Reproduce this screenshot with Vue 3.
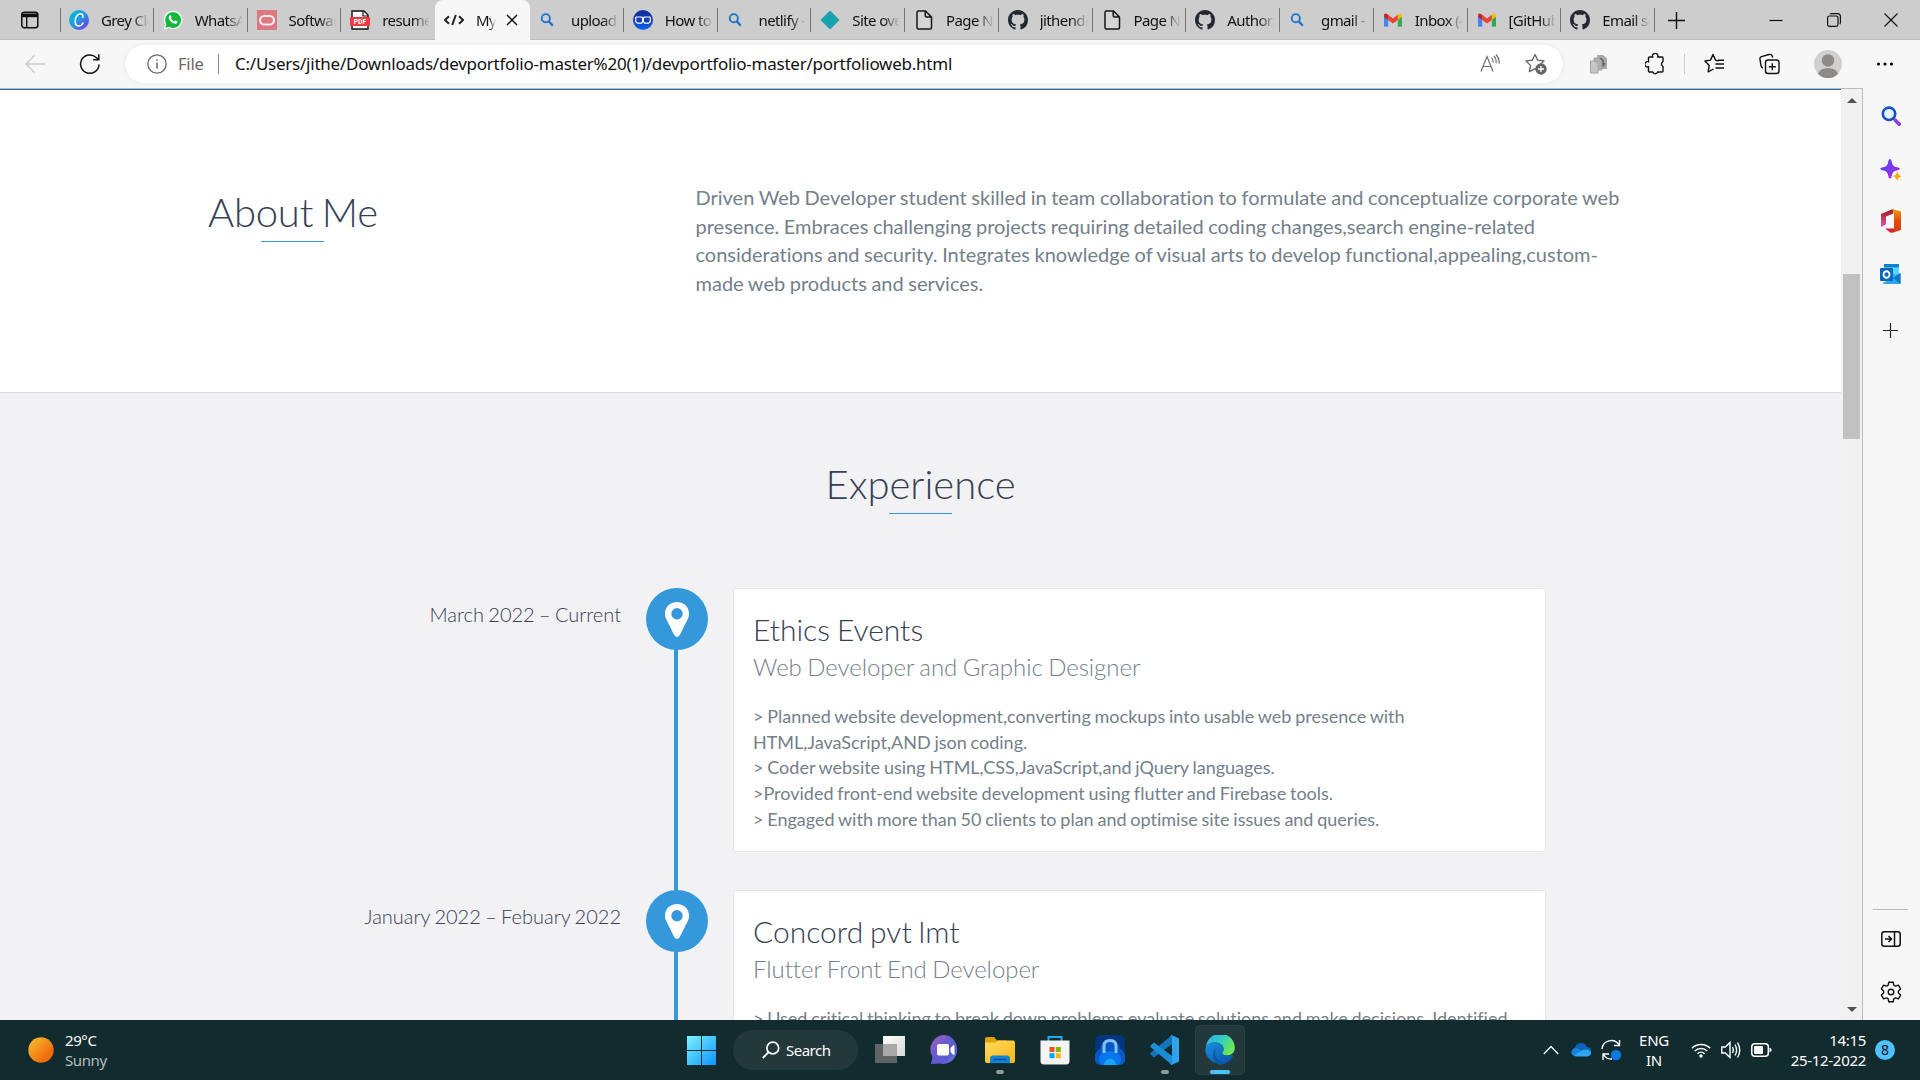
<script setup>
const tabs = [
  { icon: 'canva', title: 'Grey Clea' },
  { icon: 'whatsapp', title: 'WhatsApp' },
  { icon: 'oracle', title: 'Software' },
  { icon: 'pdf', title: 'resume.' },
  { icon: 'code', title: 'My P', active: true },
  { icon: 'find', title: 'upload f' },
  { icon: 'goggles', title: 'How to p' },
  { icon: 'find', title: 'netlify - S' },
  { icon: 'diamond', title: 'Site over' },
  { icon: 'page', title: 'Page No' },
  { icon: 'github', title: 'jithendra' },
  { icon: 'page', title: 'Page No' },
  { icon: 'github', title: 'Authoriz' },
  { icon: 'find', title: 'gmail - S' },
  { icon: 'gmail', title: 'Inbox (4' },
  { icon: 'gmail', title: '[GitHub]' },
  { icon: 'github', title: 'Email set' },
]

const about = [
  'Driven Web Developer student skilled in team collaboration to formulate and conceptualize corporate web',
  'presence. Embraces challenging projects requiring detailed coding changes,search engine-related',
  'considerations and security. Integrates knowledge of visual arts to develop functional,appealing,custom-',
  'made web products and services.',
]

const jobs = [
  {
    date: 'March 2022 – Current',
    company: 'Ethics Events',
    role: 'Web Developer and Graphic Designer',
    lines: [
      '> Planned website development,converting mockups into usable web presence with',
      'HTML,JavaScript,AND json coding.',
      '> Coder website using HTML,CSS,JavaScript,and jQuery languages.',
      '>Provided front-end website development using flutter and Firebase tools.',
      '> Engaged with more than 50 clients to plan and optimise site issues and queries.',
    ],
  },
  {
    date: 'January 2022 – Febuary 2022',
    company: 'Concord pvt lmt',
    role: 'Flutter Front End Developer',
    lines: [
      '> Used critical thinking to break down problems,evaluate solutions and make decisions. Identified',
    ],
  },
]

const pinned = [
  { icon: 'taskview' },
  { icon: 'chat' },
  { icon: 'explorer', open: true },
  { icon: 'store' },
  { icon: 'lock' },
  { icon: 'vscode', open: true },
  { icon: 'edge', current: true },
]
</script>

<template>
  <div class="screen">
    <svg class="sprite" width="0" height="0">
      <defs>
        <linearGradient id="g-canva" x1="0" y1="0" x2="1" y2="1"><stop offset="0" stop-color="#00c4cc" /><stop offset=".45" stop-color="#1c9fe0" /><stop offset="1" stop-color="#7d2ae8" /></linearGradient>
        <linearGradient id="g-gog" x1="0" y1="0" x2="0" y2="1"><stop offset="0" stop-color="#12309c" /><stop offset=".5" stop-color="#123ab0" /><stop offset="1" stop-color="#0a6bf5" /></linearGradient>
        <linearGradient id="g-win" x1="0" y1="0" x2="1" y2="1"><stop offset="0" stop-color="#7df3ff" /><stop offset="1" stop-color="#0a94ff" /></linearGradient>
        <linearGradient id="g-sun" x1="0" y1="0" x2="1" y2="1"><stop offset="0" stop-color="#f3c534" /><stop offset=".75" stop-color="#f26c0d" /></linearGradient>
        <linearGradient id="g-folder" x1="0" y1="0" x2="1" y2="1"><stop offset="0" stop-color="#ffd95e" /><stop offset="1" stop-color="#fbb716" /></linearGradient>
        <linearGradient id="g-chat" x1="0" y1="0" x2="1" y2="1"><stop offset="0" stop-color="#a865b4" /><stop offset=".4" stop-color="#6a5ad0" /><stop offset=".7" stop-color="#5a5bd0" /><stop offset="1" stop-color="#6b8cf0" /></linearGradient>
        <linearGradient id="g-tv" x1="0" y1="0" x2="1" y2="1"><stop offset="0" stop-color="#fff" /><stop offset="1" stop-color="#d8d8d8" /></linearGradient>
        <linearGradient id="g-edge1" x1="0" y1="0" x2="1" y2=".5"><stop offset="0" stop-color="#2dabe8" /><stop offset=".5" stop-color="#2fc9c9" /><stop offset="1" stop-color="#6de955" /></linearGradient>
        <linearGradient id="g-edge2" x1="0" y1="0" x2="1" y2="1"><stop offset="0" stop-color="#1793df" /><stop offset="1" stop-color="#0d4ea6" /></linearGradient>
        <linearGradient id="g-spark" x1="0" y1="0" x2="1" y2="1"><stop offset="0" stop-color="#4b50e8" /><stop offset="1" stop-color="#ac22f0" /></linearGradient>
        <linearGradient id="g-off1" x1="0" y1="0" x2="0" y2="1"><stop offset="0" stop-color="#f39a0c" /><stop offset=".5" stop-color="#e34a06" /><stop offset="1" stop-color="#d83b01" /></linearGradient>
        <linearGradient id="g-off2" x1="0" y1="0" x2="0" y2="1"><stop offset="0" stop-color="#a01414" /><stop offset="1" stop-color="#e35cae" /></linearGradient>
      </defs>
      <symbol id="canva" viewBox="0 0 20 20"><circle cx="10" cy="10" r="10" fill="url(#g-canva)" /><path d="M13.800 7.200c.6-1.800-.4-3.400-2.200-3.400-2.900 0-5.400 3.300-5.400 7.100 0 3.200 1.500 5.100 3.700 5.100 1.800 0 3.200-1.200 4.100-3" fill="none" stroke="#fff" stroke-width="1.500" stroke-linecap="round" /></symbol>
      <symbol id="whatsapp" viewBox="0 0 20 20"><path d="M.8 19.400 2.100 14.500A9.300 9.300 0 1 1 5.700 18z" fill="#f5fff5" /><path d="M2.400 17.700 3.400 14.200A7.900 7.900 0 1 1 6 16.800z" fill="#12b83c" /><path d="M6.700 5.400c.6-.5 1.100-.2 1.300.3l.6 1.400c.1.500-.5.9-.7 1.200.8 1.500 1.800 2.500 3.500 3.200.5-.3.800-1.100 1.300-.9l1.600.8c.6.3 0 1.900-1 2.300-2.800 1-7.400-3-7.600-6.100-.1-.9.400-1.800 1-2.200z" fill="#fff" /></symbol>
      <symbol id="oracle" viewBox="0 0 20 20"><path d="M0 0h20v20H0z" fill="#dc7880" /><rect x="3" y="6" width="14" height="8.500" rx="4.200" fill="none" stroke="#fff" stroke-opacity=".85" stroke-width="2.200" /></symbol>
      <symbol id="code" viewBox="0 0 20 20"><path d="M5 6.200 1 10l4 3.800M15 6.200 19 10l-4 3.800M11.800 5 8.200 15" fill="none" stroke="#222" stroke-width="2" /></symbol>
      <symbol id="find" viewBox="0 0 20 20"><circle cx="6.800" cy="8.200" r="4.100" fill="none" stroke="#1a76cc" stroke-width="1.900" /><path d="m9.800 11.400 4 4.300" stroke="#1a76cc" stroke-width="2.300" /></symbol>
      <symbol id="goggles" viewBox="0 0 20 20"><circle cx="10" cy="10" r="10" fill="url(#g-gog)" /><path d="M3.300 7h5.200l1.100 1v3.700l-1.100 1.400H4.300L2.700 11.700V7.600zM16.700 7h-5.200l-1.100 1v3.700l1.100 1.400h4.200l1.600-1.400V7.600z" fill="#1240b4" stroke="#fff" stroke-width="1.200" stroke-linejoin="round" /></symbol>
      <symbol id="diamond" viewBox="0 0 20 20"><path d="M10 .5 19.500 10 10 19.500.5 10z" fill="#17a2ae" /></symbol>
      <symbol id="page" viewBox="0 0 20 20"><path d="M4.500 1h7l6 6v10.500q0 1.500-1.500 1.500H4.500Q3 19 3 17.500v-15Q3 1 4.500 1zM11.200 1v4.500q0 1.500 1.500 1.500h4.700" fill="#ddd" fill-opacity=".5" stroke="#161616" stroke-width="1.500" /></symbol>
      <symbol id="github" viewBox="0 0 16 16"><path fill="#24292f" d="M8 0C3.580 0 0 3.580 0 8c0 3.540 2.290 6.530 5.470 7.590.4.070.55-.17.55-.38 0-.19-.01-.82-.01-1.490-2.010.37-2.530-.49-2.690-.94-.09-.23-.48-.94-.82-1.130-.28-.15-.68-.52-.01-.53.63-.01 1.080.58 1.230.82.72 1.210 1.870.87 2.330.66.070-.52.28-.87.51-1.070-1.780-.2-3.640-.89-3.640-3.950 0-.87.31-1.590.82-2.150-.08-.2-.36-1.020.08-2.120 0 0 .67-.21 2.200.82.64-.18 1.320-.27 2-.27s1.360.09 2 .27c1.530-1.040 2.200-.82 2.200-.82.44 1.100.16 1.920.08 2.120.51.56.82 1.270.82 2.150 0 3.070-1.870 3.750-3.650 3.950.29.25.54.73.54 1.480 0 1.070-.01 1.930-.01 2.200 0 .21.15.46.55.38A8.010 8.010 0 0 0 16 8c0-4.420-3.580-8-8-8z" /></symbol>
      <symbol id="gmail" viewBox="0 0 20 20"><path d="M1 6v9.500q0 1.200 1.200 1.200h3V9z" fill="#4285f4" /><path d="M19 6v9.500q0 1.200-1.200 1.200h-3V9z" fill="#34a853" /><path d="M14.800 4.800 16 4q3-1.300 3 1.800v1L14.800 10z" fill="#fbbc04" /><path d="M5.200 4.800 10 8.500l4.800-3.700V10L10 13.500 5.200 10z" fill="#ea4335" /><path d="M5.200 4.800 4 4Q1 2.700 1 5.800v1L5.200 10z" fill="#c5221f" /></symbol>

      <symbol id="taskview" viewBox="0 0 30 30"><path d="M0 9h22v19H0z" fill="#5f6465" /><path d="M8 1h22v20H8z" fill="url(#g-tv)" /><path d="M8 9h14v12H8z" fill="#a8a8a8" /></symbol>
      <symbol id="chat" viewBox="0 0 30 30"><path d="M15 0a14 14.500 0 1 1-5 28.500L1 29l1.500-7A14 14.500 0 0 1 15 0z" fill="url(#g-chat)" /><rect x="7" y="9" width="12" height="11.500" rx="1.800" fill="#fff" /><path d="m20.500 13 3-3q1 0 1 1v8q0 1-1 1l-3-3z" fill="#fff" /></symbol>
      <symbol id="explorer" viewBox="0 0 30 30"><path d="M0 4q0-2 2-2h7l3 3.500h10V12H0z" fill="#e2a007" /><path d="M0 7.500h10l3-2h15q2 0 2 2V26q0 2-2 2H2q-2 0-2-2z" fill="url(#g-folder)" /><path d="M5 28v-4q0-3.500 3-3.500h14q3 0 3 3.500v4z" fill="#1182d8" /><path d="M8.500 24.500h13" stroke="#0a4a8b" stroke-width="1.500" /></symbol>
      <symbol id="store" viewBox="0 0 30 30"><path d="M8.500 8V2h13v6" fill="none" stroke="#22a9e8" stroke-width="2" /><path d="M.5 5.500h29V26q0 3.500-3.500 3.500H4Q.5 29.500.5 26z" fill="#f3f3f3" /><path d="M9.500 12h5v5h-5z" fill="#f25022" /><path d="M15.800 12h5v5h-5z" fill="#7fba00" /><path d="M9.500 18.200h5v5h-5z" fill="#00a4ef" /><path d="M15.800 18.200h5v5h-5z" fill="#ffb900" /></symbol>
      <symbol id="lock" viewBox="0 0 30 30"><rect width="30" height="30" rx="6" fill="#04357f" /><path d="M0 20q2-5 5-6 1-8 10-10 9 2 10 10 3 1 5 6v4q0 6-6 6H6q-6 0-6-6z" fill="#0859c4" /><path d="M4 25q0-9 11-9t11 9q0 3-3 5H7q-3-2-3-5z" fill="#0a76ee" /><path d="M9 18v-7q0-5.500 6-5.500t6 5.500v7" fill="none" stroke="#7fc3f3" stroke-width="3" /><path d="M9 30a6 6.500 0 0 1 12 0z" fill="#16a4fb" /></symbol>
      <symbol id="vscode" viewBox="0 0 30 30"><path d="M22 0v9L4 22.500l-3.500-3v-1.500z" fill="#1276bb" /><path d="M22 30v-9L4 7.500l-3.500 3v1.500z" fill="#1c8ed6" /><path d="M21.500 0 29 3.500v23L21.500 30 20 28.500h2v-27h-2z" fill="#2ea2ec" /></symbol>
      <symbol id="edge" viewBox="0 0 30 30"><path d="M1 13A14.300 14.300 0 0 1 29.800 13c0 5-4 7.500-8 7.500-3 0-5-1.200-5-2.200 0-.8 1.800-1.800 1.800-4.300 0-4-4.300-6.500-8.300-6.500S2 9.500 1 13z" fill="url(#g-edge1)" /><path d="M.2 15.500C.2 10 5 7.400 10 7.400c5.500 0 8.600 3.600 8.600 6.600 0 1.400-.7 2.600-1.300 3.300-.8 1 2.200 3.400 5.600 3.400 2.800 0 4-.8 4.900-.8.600 0 .7.500.4 1A15 15 0 0 1 .2 15.500z" fill="url(#g-edge2)" /><path d="M12 12.500c-3 3.500-2.500 9.500 1.500 12.500 4 2.800 9.500 2 14-3.500a15 15 0 0 1-13 8.400C7.500 28 6 16 12 12.500z" fill="#0a57a8" /></symbol>
    </svg>

    <header class="tabbar">
      <div class="tab-actions">
        <svg width="20" height="20" viewBox="0 0 20 20"><rect x="1.800" y="2.200" width="16" height="15.600" rx="2.500" fill="none" stroke="#111" stroke-width="1.500" /><path d="M2 3.500h16v3.700H2z" fill="#111" /><path d="M6.700 7v10.500" stroke="#111" stroke-width="1.400" /></svg>
      </div>
      <div class="tabs">
        <div v-for="(tab, i) in tabs" :key="i" class="tab" :class="{ active: tab.active, bare: i === 3 }">
          <svg v-if="tab.icon === 'pdf'" class="favicon" width="20" height="20" viewBox="0 0 20 20"><path d="M2 1h12l4 4v14H2z" fill="#fff" stroke="#111" stroke-width="1.400" /><path d="M13 1v5h5" fill="none" stroke="#111" stroke-width="1.200" /><rect y="7" width="20" height="9" rx="1" fill="#f03a3f" /><text x="10" y="14" font-size="6.800" font-weight="700" text-anchor="middle" fill="#fff" font-family="Roboto, sans-serif">PDF</text></svg>
          <svg v-else class="favicon" width="20" height="20"><use :href="'#' + tab.icon" /></svg>
          <span class="tab-title">{{ tab.title }}</span>
          <svg v-if="tab.active" class="tab-close" width="12" height="12" viewBox="0 0 12 12"><path d="m1 1 10 10M11 1 1 11" stroke="#111" stroke-width="1.500" /></svg>
        </div>
      </div>
      <svg class="new-tab" width="17" height="17" viewBox="0 0 17 17"><path d="M8.500 0v17M0 8.500h17" stroke="#111" stroke-width="1.400" /></svg>
      <div class="window-buttons">
        <svg width="14" height="14" viewBox="0 0 14 14"><path d="M.5 7.500h13" stroke="#111" stroke-width="1.200" /></svg>
        <svg width="14" height="14" viewBox="0 0 14 14"><rect x=".6" y="3" width="10.400" height="10.400" rx="1.800" fill="none" stroke="#111" stroke-width="1.200" /><path d="M3 1q.5-.4 1.500-.4h6q2.900 0 2.900 2.900v6q0 1-.5 1.600" fill="none" stroke="#111" stroke-width="1.200" /></svg>
        <svg width="14" height="14" viewBox="0 0 14 14"><path d="m.5.5 13 13M13.500.5.5 13.500" stroke="#111" stroke-width="1.100" /></svg>
      </div>
    </header>

    <div class="toolbar">
      <svg class="back" width="22" height="20" viewBox="0 0 22 20"><path d="M21 10H2M10.500 1.500 2 10l8.500 8.500" fill="none" stroke="#ccc" stroke-width="1.500" /></svg>
      <svg class="reload" width="22" height="22" viewBox="0 0 22 22"><path d="M20 11.500A9.200 9.200 0 1 1 17.200 4.500L19.500 6.500M19.800 1.200v5.600h-5.600" fill="none" stroke="#111" stroke-width="1.500" /></svg>
      <div class="address">
        <svg class="info" width="20" height="20" viewBox="0 0 20 20"><circle cx="10" cy="10" r="9.200" fill="none" stroke="#6b6b6b" stroke-width="1.300" /><path d="M10 8.500v6.200M10 5.200v1.600" stroke="#6b6b6b" stroke-width="1.500" /></svg>
        <span class="scheme">File</span>
        <i class="address-sep"></i>
        <span class="url">C:/Users/jithe/Downloads/devportfolio-master%20(1)/devportfolio-master/portfolioweb.html</span>
        <svg class="read" width="20" height="20" viewBox="0 0 20 20"><path d="m1 17.500 6-15 6 15M3.200 12.500h7.600M11.500 3.500q2 2.500 1.500 5M14 2q3 3.500 2 7M16 .5q4 4.500 3 9" fill="none" stroke="#6e6e6e" stroke-width="1.200" /></svg>
        <svg width="22" height="22" viewBox="0 0 22 22"><path d="m10 1.500 2.700 5.600 6.300.9-4.600 4.400 1 6-5.400-2.800-5.600 3 1.100-6.200L1 8l6.300-.9z" fill="none" stroke="#666" stroke-width="1.300" stroke-linejoin="round" /><circle cx="16" cy="16" r="5.700" fill="#666" /><path d="M16 13v6M13 16h6" stroke="#fff" stroke-width="1.300" /></svg>
      </div>
      <div class="tools">
        <svg width="20" height="20" viewBox="0 0 20 20"><path d="M8 1h6l4 3.500V15h-8z" fill="#a8a8a8" /><path d="M11 4q4 0 4 5h2l-3 4-3-4h2q0-3-3-3z" fill="#666" /><path d="M5 4h5l3 3v9H5z" fill="#b0b0b0" stroke="#999" stroke-width=".8" /><path d="M1.500 7h4.500l3 3v9H1.500z" fill="#c6c6c6" stroke="#a2a2a2" /></svg>
        <svg width="20" height="22" viewBox="0 0 20 22"><path d="M4.500 4h3.200a2.700 2.700 0 1 1 5 0H17q1 0 1 1v3.500a2.800 2.800 0 0 0 0 5V18q0 1-1 1h-4.300a2.700 2.700 0 0 1-5 0H4.500q-1 0-1-1v-4.200a2.700 2.700 0 1 1 0-5V5q0-1 1-1z" fill="none" stroke="#111" stroke-width="1.400" /></svg>
        <i class="tools-sep"></i>
        <svg width="22" height="22" viewBox="0 0 22 22"><path d="M14.500 8 11.600 7.100 9 1.500 6.500 7.100 1 8l4.200 4.400-1 6.400L9.500 16M11.500 11H20M11.500 15H20M14 7.300h6" fill="none" stroke="#111" stroke-width="1.400" stroke-linejoin="round" /></svg>
        <svg width="22" height="22" viewBox="0 0 22 22"><rect x="6.500" y="7" width="13.500" height="13.500" rx="2.500" fill="none" stroke="#111" stroke-width="1.400" /><path d="M13.300 10.200v7M9.800 13.700h7M4 15q-1.500-.5-2-2.300L1 6.500q-.5-2 1.500-2.800L10 1.500q2.500-.5 3.200 1.500l.5 1.500" fill="none" stroke="#111" stroke-width="1.400" /></svg>
        <svg width="28" height="28" viewBox="0 0 28 28"><circle cx="14" cy="14" r="14" fill="#d2d0ce" /><circle cx="14" cy="10.500" r="6.200" fill="#8e8a87" /><path d="M4 24q2-6 10-6t10 6a14 14 0 0 1-20 0z" fill="#8e8a87" /></svg>
        <svg width="18" height="6" viewBox="0 0 18 6"><circle cx="2.500" cy="3" r="1.600" /><circle cx="9" cy="3" r="1.600" /><circle cx="15.500" cy="3" r="1.600" /></svg>
      </div>
    </div>

    <div class="body">
      <main class="page">
        <section class="about">
          <div class="about-heading"><h2 class="h-about">About Me</h2></div>
          <p class="about-text"><span v-for="line in about" :key="line">{{ line }}</span></p>
        </section>
        <section class="experience">
          <h2 class="h-exp">Experience</h2>
          <div class="timeline">
            <article v-for="job in jobs" :key="job.company" class="job">
              <div class="date">{{ job.date }}</div>
              <div class="rail">
                <div class="pin"><svg width="24" height="35" viewBox="0 0 24 35"><path fill-rule="evenodd" d="M12 0C5 0 0 5 0 11.500c0 2 .3 3.600 1 5l8.300 16.800q2.700 3.400 5.400 0L23 16.500c.7-1.400 1-3 1-5C24 5 19 0 12 0zm0 6a5.700 5.700 0 1 1 0 11.400A5.700 5.700 0 0 1 12 6z" fill="#fff" /></svg></div>
              </div>
              <div class="card">
                <h3>{{ job.company }}</h3>
                <h4>{{ job.role }}</h4>
                <p><span v-for="line in job.lines" :key="line">{{ line }}</span></p>
              </div>
            </article>
          </div>
        </section>
      </main>
      <div class="scrollbar">
        <i class="arrow up"></i>
        <div class="thumb"></div>
        <i class="arrow down"></i>
      </div>
      <aside class="sidebar">
        <div class="side-top">
          <svg width="20" height="20" viewBox="0 0 20 20"><circle cx="8" cy="7.800" r="6.200" fill="#e6f4ff" stroke="#1450d0" stroke-width="2.600" /><path d="m12.500 12.500 2.500 2.500" stroke="#555" stroke-width="2" /><path d="m14.500 14.500 3.700 3.700" stroke="#8a3fe8" stroke-width="3.600" stroke-linecap="round" /></svg>
          <svg width="22" height="22" viewBox="0 0 22 22"><path d="M10 0q1.600 0 1.800 3 .6 4.600 5 5.200 3 .3 3 1.600t-3 1.600q-4.400.6-5 5.200-.2 3-1.800 3t-1.800-3q-.6-4.600-5-5.200-3-.3-3-1.600t3-1.600q4.400-.6 5-5.200Q8.400 0 10 0z" fill="url(#g-spark)" /><path d="M17.200 12.500q.8 4 4.800 4.700-4 .8-4.800 4.700-.8-4-4.800-4.700 4-.7 4.800-4.700z" fill="#f5a800" /></svg>
          <svg width="20" height="24" viewBox="0 0 20 24"><path d="M12 0 0 5v13l5-2.500V7.500l7-2.700z" fill="url(#g-off2)" /><path d="m11 0 9 2.500v18.500L11 24l2-5V5z" fill="url(#g-off1)" /><path d="M4 19.500h9V22l-3 2z" fill="#d9223c" /></svg>
          <svg width="21" height="20" viewBox="0 0 21 20"><path d="M4 0h15v14H4z" fill="#3bb8ee" /><path d="M4 0h15v3H4z" fill="#1080cb" /><path d="M11 4h8v6h-8z" fill="#56d5ff" /><path d="m3 19 17.500-10V20H3z" fill="#2aa8ea" /><path d="m13 14 7.500-5v11z" fill="#1276c8" /><rect y="4" width="13" height="13" rx="1" fill="#0a68bd" /><ellipse cx="6.500" cy="10.500" rx="3" ry="3.300" fill="none" stroke="#fff" stroke-width="1.900" /></svg>
          <svg width="15" height="15" viewBox="0 0 15 15"><path d="M7.500 0v15M0 7.500h15" stroke="#222" stroke-width="1.200" /></svg>
        </div>
        <div class="side-bottom">
          <svg width="20" height="16" viewBox="0 0 20 16"><rect x=".8" y=".8" width="18.400" height="14.400" rx="2.500" fill="none" stroke="#111" stroke-width="1.500" /><path d="M13.500 1v14M4 8h6.500M7.500 5l3 3-3 3" fill="none" stroke="#111" stroke-width="1.500" /></svg>
          <svg width="22" height="22" viewBox="0 0 22 22"><path d="M8.800 1.200h4.400l.6 2.900 1.700 1 2.900-1 2.200 3.800L18.400 10v2l2.200 2.100-2.200 3.800-2.900-1-1.700 1-.6 2.900H8.800l-.6-2.900-1.700-1-2.900 1-2.200-3.800L3.600 12v-2L1.400 7.900l2.200-3.800 2.900 1 1.700-1z" fill="none" stroke="#111" stroke-width="1.400" stroke-linejoin="round" /><circle cx="11" cy="11" r="2.800" fill="none" stroke="#111" stroke-width="1.400" /></svg>
        </div>
      </aside>
    </div>

    <footer class="taskbar">
      <div class="weather">
        <svg width="26" height="26"><circle cx="13" cy="13" r="12.700" fill="url(#g-sun)" /></svg>
        <div><div class="temp">29°C</div><div class="cond">Sunny</div></div>
      </div>
      <div class="dock">
        <svg class="start" width="29" height="29" viewBox="0 0 29 29"><path d="M0 0h14v14H0zM15 0h14v14H15zM0 15h14v14H0zM15 15h14v14H15z" fill="url(#g-win)" /></svg>
        <div class="search">
          <svg width="18" height="18" viewBox="0 0 18 18"><circle cx="10.800" cy="7" r="5.900" fill="none" stroke="#fff" stroke-width="1.700" /><path d="M6.600 11.200.8 17" stroke="#fff" stroke-width="1.800" /></svg>
          <span>Search</span>
        </div>
        <div v-for="app in pinned" :key="app.icon" class="app" :class="{ open: app.open, current: app.current }">
          <svg width="30" height="30"><use :href="'#' + app.icon" /></svg>
        </div>
      </div>
      <div class="tray">
        <svg class="caret" width="16" height="10" viewBox="0 0 16 10"><path d="m.8 9 7.200-7.500L15.200 9" fill="none" stroke="#fff" stroke-width="1.300" /></svg>
        <svg class="cloud" width="20" height="14" viewBox="0 0 20 14"><path d="M4.500 13A4.400 4.400 0 0 1 3.800 4.800 6.500 6.500 0 0 1 16 4a4.500 4.500 0 0 1 .5 9z" fill="#0f62ba" /><path d="M.2 9.500Q1 5 5 4.900L16 10l-2 3H4.500Q.8 13 .2 9.500z" fill="#1782dc" /><path d="m3 12 10-5.500q7-.500 7 3.500-.3 3.300-4 3.400H5q-1.200-.2-2-1.400z" fill="#30a6f0" /></svg>
        <svg class="sync" width="21" height="22" viewBox="0 0 21 22"><path d="M1 10A9.200 9.200 0 0 1 18 6M18.500 1v5.500H13M2 21v-6h6M2.500 15.500q3 5 8.500 4.500" fill="none" stroke="#fff" stroke-width="1.400" /><circle cx="15" cy="16" r="5.200" fill="#0a78e0" /></svg>
        <div class="lang"><div>ENG</div><div>IN</div></div>
        <svg class="wifi" width="20" height="16" viewBox="0 0 20 16"><path d="M.8 6.200a13 13 0 0 1 18.400 0M3.700 9a9 9 0 0 1 12.600 0M6.500 11.700a5 5 0 0 1 7 0" fill="none" stroke="#fff" stroke-width="1.500" /><circle cx="10" cy="14" r="1.700" fill="#fff" /></svg>
        <svg class="vol" width="20" height="18" viewBox="0 0 20 18"><path d="M.8 6v6h3.500L9 16.500v-15L4.300 6zM11.500 6q1.500 3 0 6M14 3.500q3.200 5.500 0 11M16.500 1.500q4.500 7.500 0 15" fill="none" stroke="#fff" stroke-width="1.400" /></svg>
        <svg class="batt" width="21" height="14" viewBox="0 0 21 14"><rect x=".8" y=".8" width="16.500" height="12.400" rx="3" fill="none" stroke="#fff" stroke-width="1.500" /><rect x="3" y="3" width="9" height="8" rx="1" fill="#fff" /><path d="M18.500 4.500v5L20.500 8V6z" fill="#fff" /></svg>
        <div class="clock"><div>14:15</div><div>25-12-2022</div></div>
        <div class="badge">8</div>
      </div>
    </footer>
  </div>
</template>

<style>
body { margin: 0; overflow: hidden; }
</style>

<style scoped>
* { box-sizing: border-box; }
.screen { width: 1920px; height: 1080px; display: flex; flex-direction: column; overflow: hidden; background: #f7f7f7; font-family: "Noto Sans", "Open Sans", sans-serif; font-size: 15px; color: #111; }
.sprite { position: absolute; }
svg { display: block; flex: none; }
h2, h3, h4, p { margin: 0; }

.tabbar { flex: none; height: 40px; display: flex; align-items: center; background: #cdcdcd; box-shadow: inset 0 -1px #bdbdbd; }
.tab-actions { width: 60px; padding-left: 20px; }
.tabs { width: 1595px; height: 40px; display: flex; }
.tab { flex: 1 1 0; min-width: 0; display: flex; align-items: center; padding: 0 5px 0 9px; background: linear-gradient(#777, #777) no-repeat right 8px / 1px 24px; }
.tab:first-child { background: linear-gradient(#777, #777) no-repeat left 8px / 1px 24px, linear-gradient(#777, #777) no-repeat right 8px / 1px 24px; }
.tab.bare { background: none; }
.tab.active { flex: 0 0 95px; background: #f7f7f7; border-radius: 8px 8px 0 0; }
.favicon { margin-right: 12px; }
.tab-title { flex: 1; min-width: 0; overflow: hidden; white-space: nowrap; letter-spacing: -.6px; line-height: 24px; margin-bottom: 1px; mask-image: linear-gradient(90deg, #000 65%, transparent 100%); }
.tab-close { margin: 0 7px 0 10px; }
.new-tab { margin-left: 13px; }
.window-buttons { margin-left: auto; margin-right: 22px; display: flex; gap: 43.500px; }

.toolbar { flex: none; height: 48px; display: flex; align-items: center; background: #f7f7f7; }
.back { margin-left: 24px; }
.reload { margin-left: 33px; }
.address { margin-left: 24px; width: 1438px; height: 38px; display: flex; align-items: center; background: #fff; border-radius: 19px; box-shadow: 0 0 4px rgba(0, 0, 0, .07); }
.info { margin-left: 22px; }
.scheme { width: 40px; margin-left: 11px; margin-bottom: 2px; color: #666; font-size: 16.500px; letter-spacing: -.2px; }
.address-sep { width: 1px; height: 20px; background: #888; }
.url { margin-left: 16px; margin-bottom: 2px; flex: 1; font-size: 17px; letter-spacing: -.24px; white-space: nowrap; }
.read { margin-right: 25px; }
.address > svg:last-child { margin-right: 16px; }
.tools { display: flex; align-items: center; flex: 1; padding-left: 26px; }
.tools > :nth-child(2) { margin-left: 36px; }
.tools-sep { width: 1px; height: 20px; background: #ccc; margin-left: 19px; }
.tools > :nth-child(4) { margin-left: 19px; }
.tools > :nth-child(5) { margin-left: 33px; }
.tools > :nth-child(6) { margin-left: 33px; }
.tools > :nth-child(7) { margin-left: 34px; }

.body { flex: none; height: 932px; display: flex; overflow: hidden; }
.page { width: 1841px; height: 932px; overflow: hidden; border-top: 1px solid #bbb; background: #f2f2f5; font-family: Lato, sans-serif; font-variant-ligatures: none; }
.about { height: 304px; display: flex; background: #fff; border-top: 1px solid #2a6fa5; border-bottom: 1px solid #dcd9d9; }
.about-heading { width: 586px; padding-top: 100px; display: flex; justify-content: center; }
h2 { width: max-content; font-weight: 300; font-size: 40px; line-height: 44px; color: #374054; }
h2::after { content: ""; display: block; width: 63px; height: 1px; background: #3498db; margin: 7px auto 0; }
.h-about { word-spacing: -2px; letter-spacing: -.2px; }
.about-text { margin-left: 109.500px; padding-top: 93px; font-size: 20px; line-height: 28.570px; color: #74808a; word-spacing: -.55px; }
p span { display: block; white-space: nowrap; }
.experience { padding-top: 69px; }
.h-exp { margin: 0 auto; }
.timeline { margin-top: 74px; }
.job { display: flex; height: 302px; }
.date { width: 621px; padding-top: 13px; text-align: right; font-size: 20px; line-height: 26px; font-weight: 300; color: #374054; word-spacing: -1.100px; }
.rail { width: 62px; margin-left: 25px; background: linear-gradient(#3498db, #3498db) no-repeat 28px 0 / 4px 100%; }
.pin { width: 62px; height: 62px; border-radius: 50%; background: #3498db; display: flex; justify-content: center; padding-top: 14px; }
.card { width: 813px; height: 264px; margin-left: 25px; padding: 21px 19px; background: #fff; border: 1px solid #e6e6e6; border-radius: 3px; white-space: nowrap; color: #74808a; }
h3 { font-size: 30px; line-height: 38px; font-weight: 300; color: #374054; word-spacing: -1.200px; }
h4 { margin-top: 2px; font-size: 24px; line-height: 34px; font-weight: 300; word-spacing: -1px; letter-spacing: -.05px; }
.card p { margin-top: 20px; font-size: 18px; line-height: 25.700px; word-spacing: -.8px; }

.scrollbar { width: 21px; height: 932px; display: flex; flex-direction: column; align-items: center; background: #f1f1f1; border-top: 1px solid #bbb; }
.arrow { border: 5px solid transparent; }
.up { border-top: 0; border-bottom-color: #505050; margin-top: 9px; }
.down { border-bottom: 0; border-top-color: #505050; margin-top: auto; margin-bottom: 8px; }
.thumb { width: 17px; height: 165px; margin-top: 171px; background: #c1c1c1; }

.sidebar { width: 58px; height: 932px; padding-right: 2px; display: flex; flex-direction: column; justify-content: space-between; border-left: 1px solid #bbb; background: #f7f7f7; }
.side-top { display: flex; flex-direction: column; align-items: center; padding-top: 18px; }
.side-top > :nth-child(2) { margin-top: 33px; }
.side-top > :nth-child(3) { margin-top: 28px; }
.side-top > :nth-child(4) { margin-top: 31px; }
.side-top > :nth-child(5) { margin-top: 39px; }
.side-bottom { width: 35px; margin: 0 auto; height: 111px; border-top: 1px solid #bbb; padding-top: 21px; display: flex; flex-direction: column; align-items: center; gap: 34px; }

.taskbar { flex: none; height: 60px; display: flex; justify-content: space-between; position: relative; background: #122b2e; color: #fff; }
.weather { display: flex; align-items: center; margin-left: 28px; gap: 11px; width: 659px; line-height: 20px; letter-spacing: -.4px; }
.cond { color: #b4bfc0; }
.dock { display: flex; align-items: center; width: 600px; }
.search { width: 125px; height: 40px; margin: 0 12px 0 17px; border-radius: 20px; background: #22383b; display: flex; align-items: center; padding-left: 29px; gap: 6px; letter-spacing: -.5px; }
.app { width: 50px; height: 50px; margin-right: 5px; display: flex; align-items: center; justify-content: center; position: relative; border-radius: 5px; }
.search + .app { margin-left: -5px; }
.app.current { background: #22383b; border: 1px solid #2b4144; }
.open::after, .current::after { content: ""; position: absolute; left: 50%; bottom: 1px; width: 8px; height: 4px; margin-left: -4px; border-radius: 2px; background: #8f9a9b; }
.current::after { width: 20px; margin-left: -10px; bottom: 0; background: #4cc2ff; }
.tray { display: flex; align-items: center; margin-left: auto; margin-right: 25px; line-height: 20px; }
.cloud { margin-left: 12px; }
.sync { margin-left: 10px; }
.lang { width: 40px; margin-left: 12px; text-align: center; letter-spacing: -.3px; }
.wifi { margin-left: 17px; }
.vol { margin-left: 10px; }
.batt { margin-left: 10px; }
.clock { width: 94px; text-align: right; white-space: nowrap; letter-spacing: -.3px; }
.badge { width: 20px; height: 20px; margin-left: 9px; border-radius: 50%; background: #4cc2ff; color: #111; font-size: 14px; text-align: center; }
</style>
